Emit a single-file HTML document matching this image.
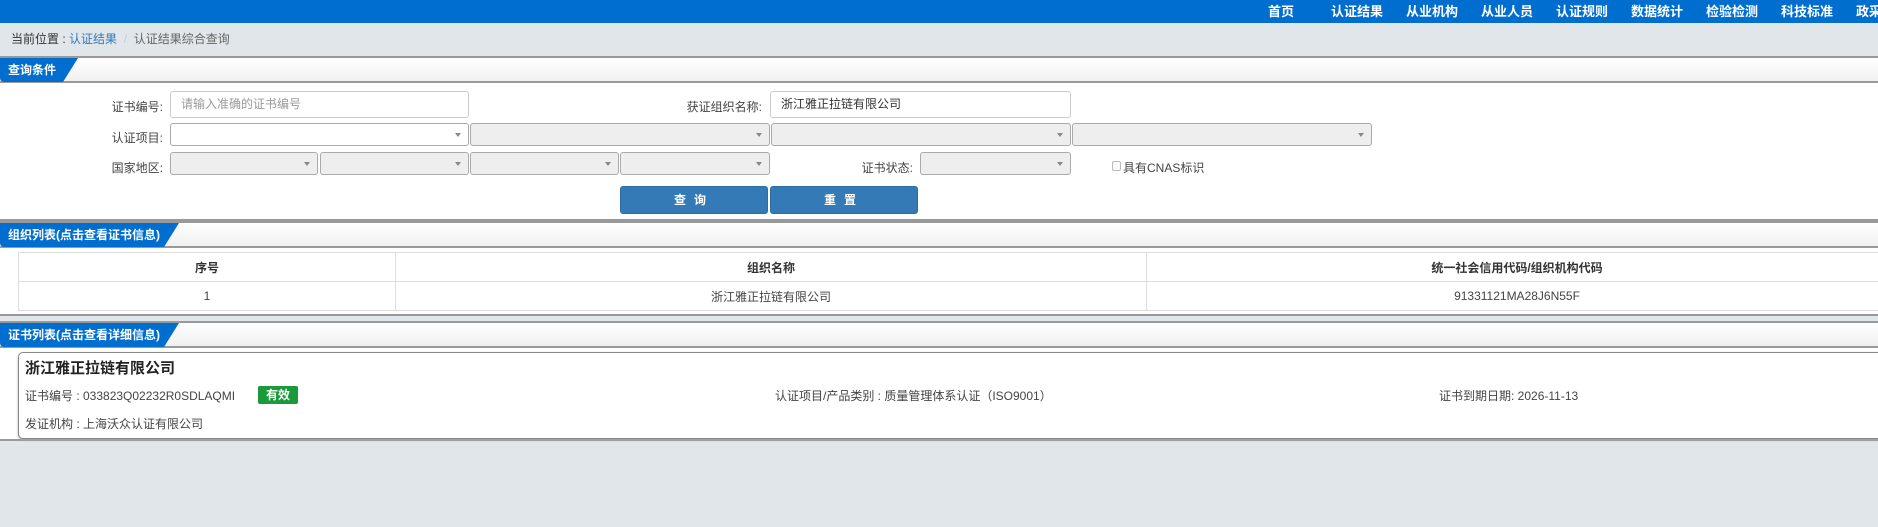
<!DOCTYPE html>
<html><head><meta charset="utf-8"><style>
*{box-sizing:border-box;margin:0;padding:0}
body{width:1878px;height:527px;overflow:hidden;background:#e1e6ea;font-family:"Liberation Sans","Noto Sans CJK SC",sans-serif;font-size:12px;color:#444;position:relative}
.abs{position:absolute}
.nav{left:0;top:0;width:1878px;height:23px;background:#006ecf}
.nav span{position:absolute;top:1px;color:#fff;font-size:13px;font-weight:bold;white-space:nowrap}
.panel{position:absolute;left:0;width:1878px;background:#fff;border-top:2px solid #999;border-bottom:2px solid #999}
.hd{height:25px;background:linear-gradient(#fff,#f0f0f0);border-bottom:2px solid #999;position:relative}
.tab{position:absolute;left:0;top:0;height:24px;background:#006ecf;color:#fff;font-weight:bold;font-size:12px;line-height:24px;padding-left:8px;clip-path:polygon(0 0,100% 0,calc(100% - 15px) 100%,0 100%);border-bottom-left-radius:4px}
.lbl{position:absolute;text-align:right;font-size:12px;color:#444}
.inp{position:absolute;border:1px solid #ccc;border-radius:3px;background:#fff;padding-left:10px;font-size:12px;line-height:25px}
.sel{position:absolute;border:1px solid #aaa;border-radius:3px;background:#eee;height:23px}
.sel:after{content:"";position:absolute;right:7px;top:9px;border-left:3px solid transparent;border-right:3px solid transparent;border-top:4px solid #888}
.btn{position:absolute;top:186px;width:148px;height:28px;background:#337ab7;border:1px solid #2e6da4;border-radius:3px;color:#fff;font-weight:bold;text-align:center;line-height:26px;letter-spacing:8px;font-size:12px}
td,th{border:1px solid #ddd;text-align:center;font-size:12px;height:29px}
th{color:#333}
</style></head><body>
<div class="abs nav">
<span style="left:1268px">首页</span><span style="left:1331px">认证结果</span><span style="left:1406px">从业机构</span><span style="left:1481px">从业人员</span><span style="left:1556px">认证规则</span><span style="left:1631px">数据统计</span><span style="left:1706px">检验检测</span><span style="left:1781px">科技标准</span><span style="left:1856px">政采</span>
</div>
<div class="abs" style="left:11px;top:30px;font-size:12px;color:#333">当前位置 : <span style="color:#337ab7">认证结果</span> <span style="color:#ccc">&nbsp;/&nbsp;</span> <span style="color:#666">认证结果综合查询</span></div>

<div class="panel" style="top:56px;height:165px">
<div class="hd"><div class="tab" style="width:78px">查询条件</div></div>
</div>
<div class="lbl" style="left:80px;top:98px;width:83px">证书编号:</div>
<div class="inp" style="left:170px;top:91px;width:299px;height:27px;color:#999">请输入准确的证书编号</div>
<div class="lbl" style="left:600px;top:98px;width:162px">获证组织名称:</div>
<div class="inp" style="left:770px;top:91px;width:301px;height:27px;color:#333">浙江雅正拉链有限公司</div>

<div class="lbl" style="left:80px;top:129px;width:83px">认证项目:</div>
<div class="sel" style="left:170px;top:123px;width:299px;background:#fff"></div>
<div class="sel" style="left:470px;top:123px;width:300px"></div>
<div class="sel" style="left:771px;top:123px;width:300px"></div>
<div class="sel" style="left:1072px;top:123px;width:300px"></div>

<div class="lbl" style="left:80px;top:159px;width:83px">国家地区:</div>
<div class="sel" style="left:170px;top:152px;width:148px"></div>
<div class="sel" style="left:320px;top:152px;width:149px"></div>
<div class="sel" style="left:470px;top:152px;width:149px"></div>
<div class="sel" style="left:620px;top:152px;width:150px"></div>
<div class="lbl" style="left:820px;top:159px;width:93px">证书状态:</div>
<div class="sel" style="left:920px;top:152px;width:151px"></div>
<div class="abs" style="left:1112px;top:161px;width:9px;height:10px;border:1px solid #bbb;border-radius:2px;background:#fafafa"></div>
<div class="abs" style="left:1123px;top:159px">具有CNAS标识</div>
<div class="btn" style="left:620px">查询</div>
<div class="btn" style="left:770px">重置</div>

<div class="panel" style="top:221px;height:95px">
<div class="hd"><div class="tab" style="width:179px">组织列表(点击查看证书信息)</div></div>
<table style="position:absolute;left:18px;top:29px;width:1870px;border-collapse:collapse">
<tr><th style="width:377px">序号</th><th style="width:751px">组织名称</th><th>统一社会信用代码/组织机构代码</th></tr>
<tr><td>1</td><td>浙江雅正拉链有限公司</td><td>91331121MA28J6N55F</td></tr>
</table>
</div>

<div class="panel" style="top:321px;height:120px;border-bottom:none;background:transparent">
<div class="hd"><div class="tab" style="width:179px">证书列表(点击查看详细信息)</div></div>
</div>
<div class="abs" style="left:0;top:348px;width:1878px;height:93px;background:#fff;border-bottom:2px solid #999"></div>
<div class="abs" style="left:18px;top:352px;width:1870px;height:87px;border:1px solid #888;border-radius:5px;background:#fff;box-shadow:0 1px 2px #aaa"></div>
<div class="abs" style="left:25px;top:357px;font-size:15px;font-weight:bold;color:#222">浙江雅正拉链有限公司</div>
<div class="abs" style="left:25px;top:387px">证书编号 : 033823Q02232R0SDLAQMI</div>
<div class="abs" style="left:258px;top:386px;width:40px;height:18px;background:#1a9a3a;border-radius:2px;color:#fff;font-weight:bold;text-align:center;line-height:18px">有效</div>
<div class="abs" style="left:775px;top:387px">认证项目/产品类别 : 质量管理体系认证（ISO9001）</div>
<div class="abs" style="left:1439px;top:387px">证书到期日期: 2026-11-13</div>
<div class="abs" style="left:25px;top:415px">发证机构 : 上海沃众认证有限公司</div>
</body></html>
